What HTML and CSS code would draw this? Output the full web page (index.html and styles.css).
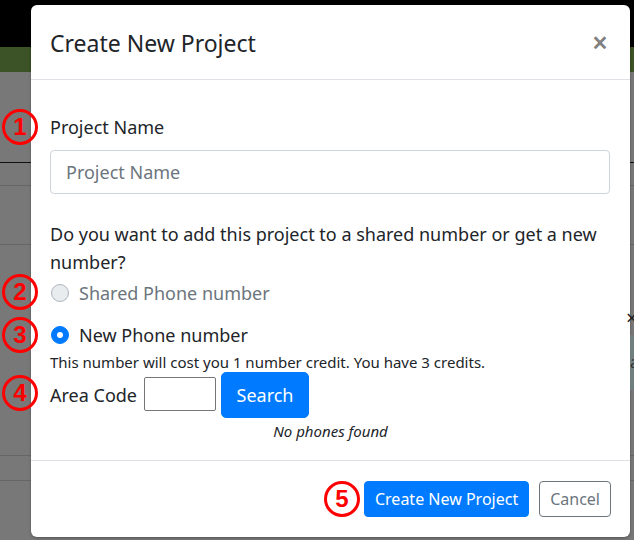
FILE: index.html
```html
<!DOCTYPE html>
<html>
<head>
<meta charset="utf-8">
<link rel="stylesheet" href="styles.css">
</head>
<body>
<div class="page">
  <div class="side-x">×</div>
  <div class="side-box">a</div>
  <div class="modal">
    <div class="modal-header">
      <h5 class="modal-title">Create New Project</h5>
      <span class="close">×</span>
    </div>
    <div class="modal-body">
      <label class="field-label">Project Name</label>
      <input class="text-input" type="text" placeholder="Project Name">
      <p class="question">Do you want to add this project to a shared number or get a new number?</p>
      <div class="radio-row disabled">
        <span class="radio"></span>
        <span class="radio-label">Shared Phone number</span>
      </div>
      <div class="radio-row checked-row">
        <span class="radio checked"></span>
        <span class="radio-label">New Phone number</span>
      </div>
      <div class="note">This number will cost you 1 number credit. You have 3 credits.</div>
      <div class="area-row">
        <span class="area-label">Area Code</span>
        <input class="area-input" type="text">
        <button class="btn btn-primary btn-search">Search</button>
      </div>
      <div class="no-phones">No phones found</div>
    </div>
    <div class="modal-footer">
      <button class="btn btn-primary">Create New Project</button>
      <button class="btn btn-outline">Cancel</button>
    </div>
  </div>
  <div class="mark mark-1">1</div>
  <div class="mark mark-2">2</div>
  <div class="mark mark-3">3</div>
  <div class="mark mark-4">4</div>
  <div class="mark mark-5">5</div>
</div>
</body>
</html>
```
FILE: styles.css
```css
* { box-sizing: border-box; }
html, body { margin: 0; padding: 0; }
body {
  width: 634px;
  height: 540px;
  overflow: hidden;
  font-family: "Noto Sans", "Open Sans", sans-serif;
  color: #212529;
}
.page {
  position: relative;
  width: 634px;
  height: 540px;
  padding-top: 5px;
  padding-left: 31px;
  background:
    linear-gradient(#000, #000) 0 0 / 100% 47px no-repeat,
    linear-gradient(#3b5326, #3b5326) 0 47px / 100% 25px no-repeat,
    linear-gradient(#111, #111) 0 162px / 100% 1px no-repeat,
    linear-gradient(#666, #666) 0 185px / 100% 1px no-repeat,
    linear-gradient(#666, #666) 0 244px / 100% 1px no-repeat,
    linear-gradient(#666, #666) 0 455px / 100% 1px no-repeat,
    linear-gradient(#666, #666) 0 480px / 100% 1px no-repeat,
    #787878;
}
.side-x {
  position: absolute;
  left: 626px;
  top: 306px;
  width: 8px;
  overflow: hidden;
  font-size: 20px;
  line-height: 24px;
  color: #222;
}
.side-box {
  position: absolute;
  left: 630px;
  top: 335px;
  width: 4px;
  height: 55px;
  background: #6f7f7f;
  color: #333;
  font-size: 16px;
  line-height: 55px;
  overflow: hidden;
}
.modal {
  width: 599px;
  height: 532px;
  background: #fff;
  border-radius: 6px;
  display: flex;
  flex-direction: column;
  box-shadow: 0 1px 3px rgba(0,0,0,0.3);
}
.modal-header {
  height: 75px;
  border-bottom: 1px solid #dee2e6;
  display: flex;
  align-items: center;
  justify-content: space-between;
  padding: 0 22px 0 19px;
}
.modal-title {
  margin: 0;
  font-size: 23px;
  font-weight: 400;
  line-height: 1.2;
  padding-top: 3px;
}
.close {
  font-size: 28px;
  font-weight: 600;
  color: #808080;
  line-height: 1;
}
.modal-body {
  flex: 1;
  padding: 34px 19px 0 19px;
  font-size: 18px;
}
.field-label {
  display: block;
  line-height: 26px;
  margin-bottom: 10px;
}
.text-input {
  display: block;
  width: 560px;
  height: 44px;
  border: 1px solid #ced4da;
  border-radius: 4px;
  padding: 0 15px;
  font-family: inherit;
  font-size: 18px;
  color: #495057;
}
.text-input::placeholder { color: #6c757d; opacity: 1; }
.question {
  margin: 26px 0 3px 0;
  line-height: 28px;
}
.radio-row {
  display: flex;
  align-items: center;
  height: 27px;
  padding-left: 1px;
}
.radio-row.checked-row { margin-top: 15px; }
.radio {
  width: 18px;
  height: 18px;
  border-radius: 50%;
  border: 1px solid #adb5bd;
  background: #e9ecef;
  margin-right: 10px;
  position: relative;
}
.radio.checked {
  background: #007bff;
  border-color: #007bff;
}
.radio.checked::after {
  content: "";
  position: absolute;
  left: 5px;
  top: 5px;
  width: 6px;
  height: 6px;
  border-radius: 50%;
  background: #fff;
}
.disabled .radio-label { color: #6c757d; }
.note {
  margin-top: 4px;
  font-size: 15px;
  line-height: 20px;
}
.area-row {
  display: flex;
  align-items: center;
  margin-top: 0;
}
.area-label { margin-right: 7px; }
.area-input {
  width: 72px;
  height: 34px;
  border: 1px solid #767676;
  border-radius: 2px;
  margin-right: 5px;
  margin-top: -3px;
}
.btn {
  font-family: inherit;
  font-size: 16px;
  border-radius: 4px;
  height: 36px;
  padding: 0 10px;
  line-height: 1;
}
.btn-primary {
  background: #007bff;
  border: 1px solid #007bff;
  color: #fff;
}
.btn-search {
  width: 88px;
  height: 46px;
  border-radius: 5px;
  font-size: 18px;
}
.btn-outline {
  background: #fff;
  border: 1px solid #6c757d;
  color: #6c757d;
}
.no-phones {
  text-align: center;
  font-style: italic;
  font-size: 15px;
  line-height: 20px;
  margin-top: 3px;
}
.modal-footer {
  height: 77px;
  border-top: 1px solid #dee2e6;
  display: flex;
  justify-content: flex-end;
  align-items: center;
  gap: 10px;
  padding: 0 19px 0 0;
}
.mark {
  position: absolute;
  width: 36px;
  height: 36px;
  border: 3px solid #ff0000;
  border-radius: 50%;
  color: #ff0000;
  font-family: "Liberation Sans", Arial, sans-serif;
  font-weight: 700;
  font-size: 24px;
  line-height: 30px;
  text-align: center;
}
.mark-1 { left: 2px; top: 109px; }
.mark-2 { left: 2px; top: 274px; }
.mark-3 { left: 2px; top: 317px; }
.mark-4 { left: 2px; top: 375px; }
.mark-5 { left: 324px; top: 481px; }
```
